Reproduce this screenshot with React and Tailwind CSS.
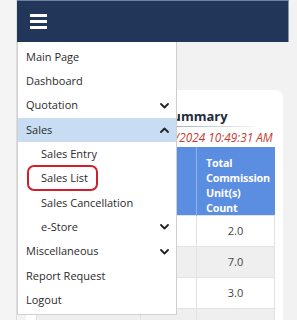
import React from "react";

function Chevron({ up }) {
  return (
    <svg width="9" height="6" viewBox="0 0 9 6" className="mr-[3px]">
      <path
        d={up ? "M1 5 L4.5 1.5 L8 5" : "M1 1 L4.5 4.5 L8 1"}
        fill="none"
        stroke="#222"
        strokeWidth="1.8"
        strokeLinecap="round"
        strokeLinejoin="round"
      />
    </svg>
  );
}

const items = [
  { t: "Main Page" },
  { t: "Dashboard" },
  { t: "Quotation", chev: "down" },
  { t: "Sales", chev: "up", active: true },
  { t: "Sales Entry", sub: true },
  { t: "Sales List", sub: true, mark: true },
  { t: "Sales Cancellation", sub: true },
  { t: "e-Store", sub: true, chev: "down" },
  { t: "Miscellaneous", chev: "down" },
  { t: "Report Request" },
  { t: "Logout" },
];

export default function App() {
  return (
    <div
      className="relative w-[297px] h-[320px] overflow-hidden bg-[#f2f2f2] flex items-start"
      style={{ fontFamily: '"Open Sans", "Noto Sans", sans-serif' }}
    >
      <div className="w-[17px] h-[320px] shrink-0 bg-[#f4f4f4] border-r border-[#dedede]" />
      <div className="w-[272px] shrink-0 flex flex-col">
        <div className="h-[42px] shrink-0 bg-[#213659] border-t border-[#6f82a3] border-r border-r-[#8a97ad] flex items-center pl-[13px]">
          <div className="flex flex-col gap-[2.5px] w-[17px]">
            <div className="h-[3.5px] bg-white" />
            <div className="h-[3.5px] bg-white" />
            <div className="h-[3.5px] bg-white" />
          </div>
        </div>
        <div className="shrink-0 pt-[48px] pl-[9px] pr-[6px]">
          <div className="bg-white rounded-[7px] pt-[16px] pl-[10px] pr-[8px] h-[260px]">
            <div className="text-[13px] font-bold text-[#1f2b3a] leading-[20px] pl-[10px] whitespace-nowrap">
              Sales Commission Summary
            </div>
            <div className="h-px bg-gradient-to-r from-[#8f99a4] via-[#a8b0b8] to-[#f4f4f4] ml-[60px] mr-[20px]" />
            <div className="text-[11.8px] italic text-[#c23b32] leading-[18px] pl-[58px] mt-[1px] whitespace-nowrap">
              Updated: 01/02/2024 10:49:31 AM
            </div>
            <table className="table-fixed w-[239px] text-[11px] border-collapse mt-[1px]">
              <thead>
                <tr className="bg-[#5b8de0] text-white align-top">
                  <th className="w-[104px] h-[65px] border-r border-[#7fa6e8]" />
                  <th className="w-[56px] border-r border-[#8fb1ec]" />
                  <th className="text-left pl-[9px] pt-[8px] leading-[15px] font-bold text-[10.8px] tracking-[-0.2px]">
                    Total
                    <br />
                    Commission
                    <br />
                    Unit(s)
                    <br />
                    Count
                  </th>
                </tr>
              </thead>
              <tbody className="text-[#444]">
                {[
                  ["", "", "2.0", false],
                  ["", "", "7.0", true],
                  ["", "", "3.0", false],
                  ["Call-Log Stage", "1", "1.0", true],
                ].map((r, i) => (
                  <tr key={i} className={r[3] ? "bg-[#efefef]" : "bg-white"}>
                    <td className="h-[31px] pl-[11px] border border-[#e2e2e2] whitespace-nowrap">{r[0]}</td>
                    <td className="text-center border border-[#e2e2e2]">{r[1]}</td>
                    <td className="text-center border border-[#e2e2e2]">{r[2]}</td>
                  </tr>
                ))}
              </tbody>
            </table>
          </div>
        </div>
      </div>

      <div className="absolute left-[17px] top-[42px] w-[160px] bg-white border border-[#cfcfcf] border-t-0 pt-[3px] pb-[2px] text-[11px] text-[#2b2b2b]">
        {items.map((it, i) => (
          <div
            key={i}
            className={`relative h-[24.3px] flex items-center justify-between pr-[4px] ${
              it.sub ? "pl-[23px]" : "pl-[8px]"
            } ${it.active ? "bg-[#c8ddf4]" : ""}`}
          >
            <span>{it.t}</span>
            {it.chev && <Chevron up={it.chev === "up"} />}
            {it.mark && (
              <div className="absolute left-[9px] top-[-1px] w-[71px] h-[26px] border-[2.5px] border-[#d01f2b] rounded-[7px]" />
            )}
          </div>
        ))}
      </div>
    </div>
  );
}
